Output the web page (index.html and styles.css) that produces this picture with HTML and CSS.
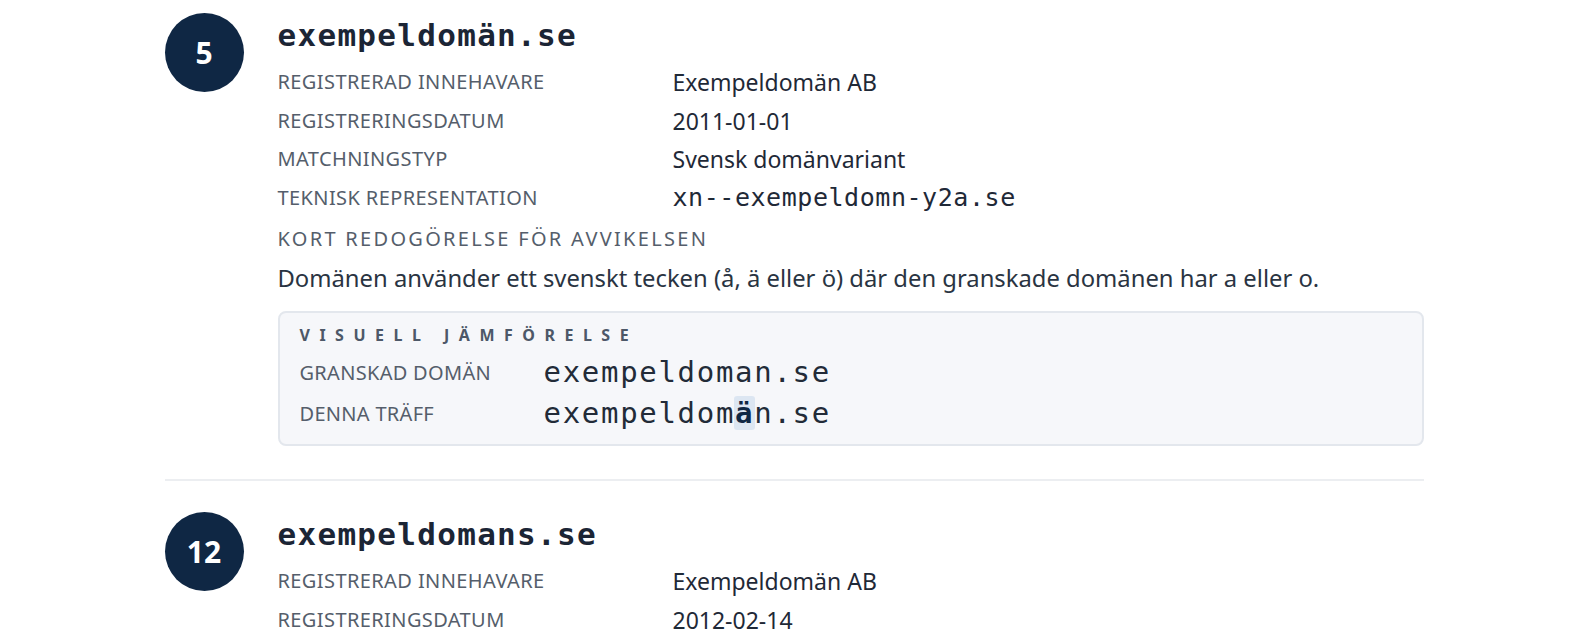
FILE: index.html
```html
<!DOCTYPE html>
<html lang="sv">
<head>
    <meta charset="utf-8">
    <title>Träffar</title>
    <link rel="stylesheet" href="styles.css">
</head>
<body>
    <div class="hits">
        <article class="hit">
            <div class="hit-rank">5</div>
            <div class="hit-body">
                <h2 class="hit-domain">exempeldomän.se</h2>
                <dl class="facts">
                    <dt>Registrerad innehavare</dt>
                    <dd>Exempeldomän AB</dd>
                    <dt>Registreringsdatum</dt>
                    <dd>2011-01-01</dd>
                    <dt>Matchningstyp</dt>
                    <dd>Svensk domänvariant</dd>
                    <dt>Teknisk representation</dt>
                    <dd class="mono">xn--exempeldomn-y2a.se</dd>
                </dl>
                <div class="note-label">Kort redogörelse för avvikelsen</div>
                <p class="note">Domänen använder ett svenskt tecken (å, ä eller ö) där den granskade domänen har a eller o.</p>
                <div class="compare">
                    <div class="compare-title">Visuell jämförelse</div>
                    <div class="compare-row">
                        <span class="compare-label">Granskad domän</span>
                        <span class="compare-value">exempeldoman.se</span>
                    </div>
                    <div class="compare-row">
                        <span class="compare-label">Denna träff</span>
                        <span class="compare-value">exempeldom<mark>ä</mark>n.se</span>
                    </div>
                </div>
            </div>
        </article>

        <hr class="sep">

        <article class="hit">
            <div class="hit-rank">12</div>
            <div class="hit-body">
                <h2 class="hit-domain">exempeldomans.se</h2>
                <dl class="facts">
                    <dt>Registrerad innehavare</dt>
                    <dd>Exempeldomän AB</dd>
                    <dt>Registreringsdatum</dt>
                    <dd>2012-02-14</dd>
                </dl>
            </div>
        </article>
    </div>
</body>
</html>
```

FILE: styles.css
```css
body {
    margin: 0;
    background: #ffffff;
    font-family: "Noto Sans", "Open Sans", sans-serif;
    color: #1f2a37;
    overflow: hidden;
}
.hits {
    max-width: 1259px;
    margin: 0 auto;
    padding-top: 13px;
}
.hit {
    display: flex;
    gap: 34px;
}
.hit-rank {
    flex-shrink: 0;
    width: 79px;
    height: 79px;
    border-radius: 50%;
    background: #0f2744;
    color: #ffffff;
    display: flex;
    align-items: center;
    justify-content: center;
    font-weight: 700;
    font-size: 30px;
}
.hit-body {
    flex: 1;
    min-width: 0;
}
.hit-domain {
    margin: 0 0 5px;
    font-family: "DejaVu Sans Mono", monospace;
    font-size: 31px;
    font-weight: 700;
    letter-spacing: 1.3px;
    line-height: 45px;
    color: #1b2535;
}
.facts {
    display: grid;
    grid-template-columns: 395px 1fr;
    margin: 0;
}
.facts dt, .facts dd {
    margin: 0;
    line-height: 38.5px;
}
.facts dt {
    font-size: 20px;
    text-transform: uppercase;
    letter-spacing: 0.4px;
    color: #555e6b;
}
.facts dd {
    font-size: 23px;
    color: #1f2937;
}
.facts dd.mono {
    font-family: "DejaVu Sans Mono", monospace;
    font-size: 25px;
    letter-spacing: 0.55px;
}
.note-label {
    margin-top: 3px;
    font-size: 20px;
    line-height: 38.5px;
    text-transform: uppercase;
    letter-spacing: 2.3px;
    color: #555e6b;
}
.note {
    margin: 0 0 14px;
    font-size: 23.8px;
    line-height: 38.5px;
    color: #2a3442;
}
.compare {
    background: #f6f7fa;
    border: 2px solid #e3e7ed;
    border-radius: 8px;
    padding: 12px 20px 10px;
}
.compare-title {
    font-size: 16px;
    font-weight: 700;
    letter-spacing: 9.5px;
    line-height: 20px;
    text-transform: uppercase;
    color: #4d5868;
    margin-bottom: 7px;
}
.compare-row {
    display: flex;
    line-height: 41px;
}
.compare-label {
    width: 244px;
    font-size: 20px;
    text-transform: uppercase;
    letter-spacing: 0.3px;
    color: #555e6b;
}
.compare-value {
    font-family: "DejaVu Sans Mono", monospace;
    font-size: 29px;
    letter-spacing: 1.7px;
    color: #222b38;
}
.compare-value mark {
    background: #dce6f2;
    color: #0f2744;
    font-weight: 700;
    border-radius: 3px;
    padding: 0 1px;
    margin: 0 -1px;
}
.sep {
    border: 0;
    height: 2px;
    background: #eceef1;
    margin: 33px 0 31px;
}
```
